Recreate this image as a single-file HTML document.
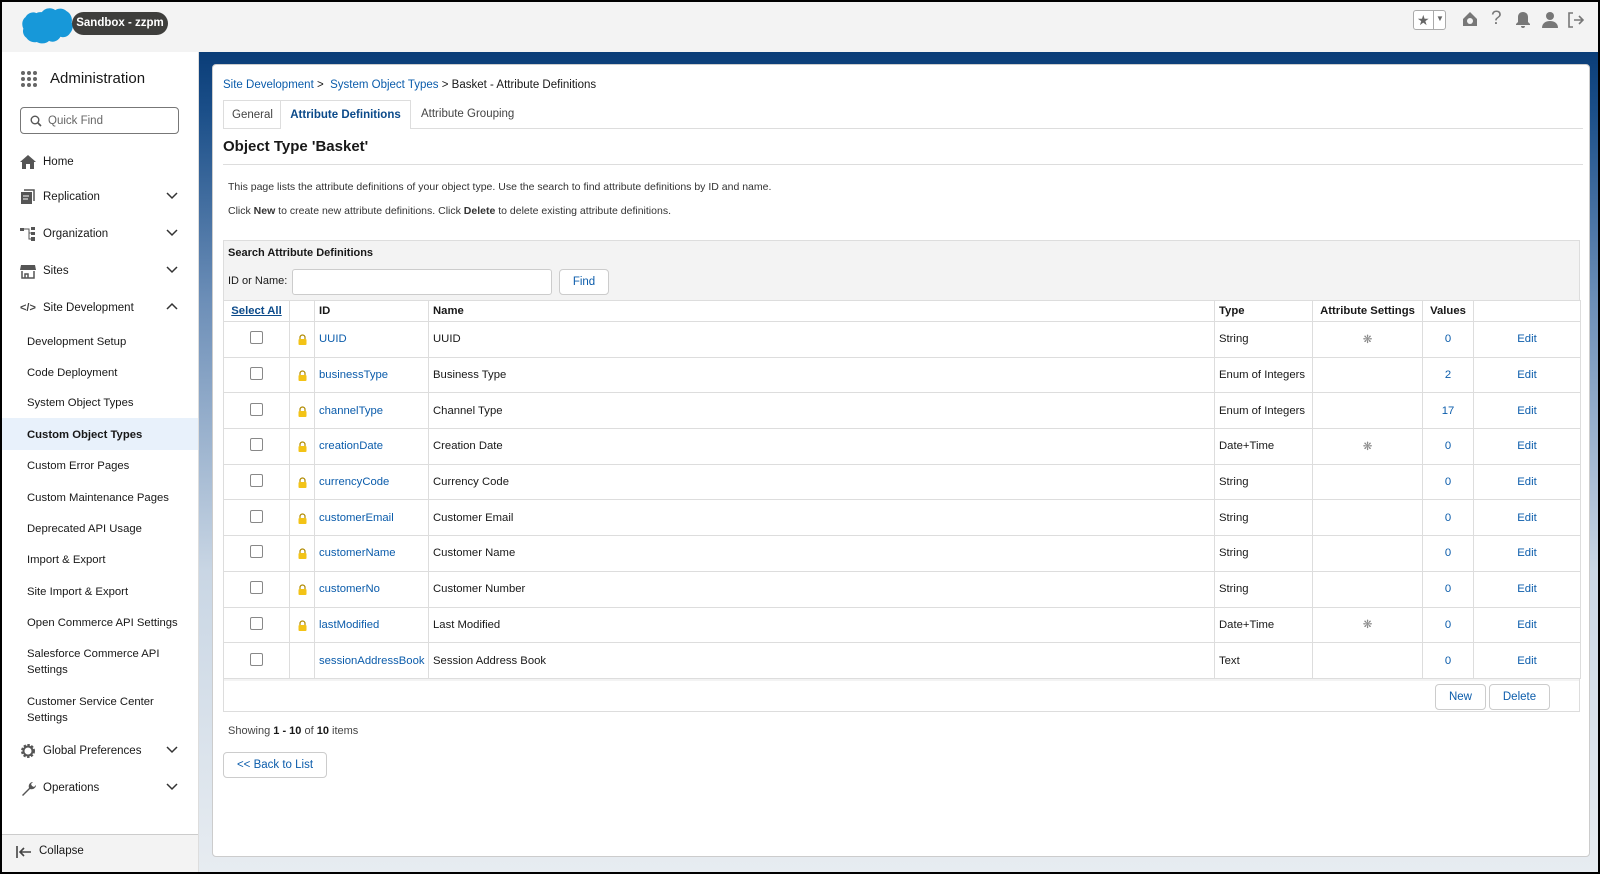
<!DOCTYPE html>
<html><head><meta charset="utf-8"><style>
*{box-sizing:border-box;margin:0;padding:0}
body{width:1600px;height:874px;overflow:hidden;font-family:"Liberation Sans",sans-serif;font-size:11.5px;color:#181818;background:#000;position:relative}
#frame{position:absolute;left:2px;top:2px;width:1596px;height:870px;background:#f3f3f3;overflow:hidden}
.a{position:absolute}
#hdr{left:0;top:0;width:1596px;height:50px;background:#f3f3f3}
#side{left:0;top:50px;width:197px;height:820px;background:#fff;border-right:1px solid #ddd}
#main{left:197px;top:50px;width:1399px;height:820px;background:linear-gradient(#0a3d78 0px,#1b4f89 60px,#6d8fb8 250px,#c9d6e4 520px,#e7ecf1 820px)}
#card{left:13px;top:12px;width:1378px;height:793px;background:#fff;border-radius:4px;border:1px solid #ccc}
.nav{position:absolute;left:18px;font-size:11.5px;color:#181818}
.nav .ic{position:absolute;left:0;top:-2px;width:16px;height:16px}
.nav span.t{position:absolute;left:23px;white-space:nowrap}
.chev{position:absolute;left:146px;top:0px;width:12px;height:10px}
.sub{position:absolute;left:25px;font-size:11.3px;color:#181818;white-space:nowrap;line-height:16px}
a{color:#0b5cab;text-decoration:none}
table{border-collapse:collapse;table-layout:fixed}
td,th{border:1px solid #ddd;font-size:11.3px;height:35.7px;padding:0 4px;text-align:left;white-space:nowrap}
th{height:21px;font-weight:bold}
.c{text-align:center}
.cb{display:inline-block;width:13px;height:13px;border:1px solid #888;border-radius:2px;background:#fff}
.lock{display:inline-block;width:9px;height:11px;position:relative;top:2px}
.btn{position:absolute;border:1px solid #ccc;border-radius:4px;background:#fff;color:#0b5cab;font-size:11.5px;text-align:center}
</style></head><body><div id="frame">
<div id="hdr" class="a">
 <svg class="a" style="left:19px;top:5px" width="52" height="37" viewBox="0 0 50 36"><path d="M20 5c3-4 9-5 13-2 3-2 8-2 11 1 4 2 6 7 5 11 2 3 1 8-2 11-2 3-6 4-9 3-2 4-7 6-11 4-3 3-8 3-12 1-4 1-8-1-10-4-3-2-4-6-3-9C0 17 1 12 4 10c2-4 7-6 11-4 1-1 3-1 5-1z" fill="#1798d9"/></svg>
 <div class="a" style="left:70px;top:10px;width:96px;height:23px;background:#3e3e3c;border-radius:12px;color:#fff;font-weight:bold;font-size:11.5px;line-height:23px;text-align:center">Sandbox - zzpm</div>
 <div class="a" style="left:1411px;top:8px;width:33px;height:20px;border:1px solid #aaa;border-radius:3px;background:#fff"><span class="a" style="left:3px;top:1px;font-size:14px;color:#666">★</span><span class="a" style="left:19px;top:0;width:1px;height:18px;background:#aaa"></span><span class="a" style="left:22px;top:3px;font-size:8px;color:#666">▼</span></div>
 <svg class="a" style="left:1459px;top:9px" width="18" height="18" viewBox="0 0 18 18"><path d="M9 1L2 8v7h14V8z" fill="#777"/><circle cx="9" cy="10" r="3" fill="#f3f3f3"/></svg>
 <div class="a" style="left:1489px;top:6px;font-size:19px;color:#777">?</div>
 <svg class="a" style="left:1513px;top:9px" width="16" height="18" viewBox="0 0 16 18"><path d="M8 1c-3 0-5 2-5 5v5l-2 2v1h14v-1l-2-2V6c0-3-2-5-5-5zM6 15a2 2 0 004 0z" fill="#777"/></svg>
 <svg class="a" style="left:1540px;top:9px" width="16" height="18" viewBox="0 0 16 18"><circle cx="8" cy="5" r="4" fill="#777"/><path d="M0 17c0-5 4-7 8-7s8 2 8 7z" fill="#777"/></svg>
 <svg class="a" style="left:1565px;top:9px" width="17" height="18" viewBox="0 0 17 18"><path d="M6 2H2v14h4M7 9h9M12 5l4 4-4 4" fill="none" stroke="#777" stroke-width="1.6"/></svg>
</div>
<div id="side" class="a">
 <svg class="a" style="left:18px;top:18px" width="18" height="18" viewBox="0 0 18 18" fill="#666"><circle cx="3" cy="3" r="2"/><circle cx="9" cy="3" r="2"/><circle cx="15" cy="3" r="2"/><circle cx="3" cy="9" r="2"/><circle cx="9" cy="9" r="2"/><circle cx="15" cy="9" r="2"/><circle cx="3" cy="15" r="2"/><circle cx="9" cy="15" r="2"/><circle cx="15" cy="15" r="2"/></svg>
 <div class="a" style="left:48px;top:18px;font-size:15px">Administration</div>
 <div class="a" style="left:18px;top:55px;width:159px;height:27px;border:1px solid #777;border-radius:4px"><svg class="a" style="left:9px;top:7px" width="12" height="12" viewBox="0 0 12 12"><circle cx="5" cy="5" r="3.8" fill="none" stroke="#555" stroke-width="1.4"/><path d="M8 8l3 3" stroke="#555" stroke-width="1.6"/></svg><span class="a" style="left:27px;top:7px;color:#666;font-size:11.5px">Quick Find</span></div>
 <div class="nav" style="top:104px"><svg class="ic" viewBox="0 0 16 16"><path d="M8 1L0 8h2v7h4v-5h4v5h4V8h2z" fill="#555"/></svg><span class="t">Home</span></div>
 <div class="nav" style="top:139px"><svg class="ic" viewBox="0 0 16 16"><rect x="1" y="3" width="11" height="12" fill="#555"/><path d="M4 1h10v11" fill="none" stroke="#555" stroke-width="1.5"/><path d="M3 7h6M3 10h5" stroke="#fff"/></svg><span class="t">Replication</span><svg class="chev" viewBox="0 0 12 10"><path d="M1 2l5 5 5-5" fill="none" stroke="#333" stroke-width="1.5"/></svg></div>
 <div class="nav" style="top:176px"><svg class="ic" viewBox="0 0 16 16" fill="#555"><rect x="0" y="2" width="4" height="3"/><rect x="11" y="1" width="4" height="3"/><rect x="11" y="6" width="4" height="3"/><rect x="11" y="11" width="4" height="4"/><path d="M4 3h5v10h2M9 7h2" stroke="#555" fill="none"/></svg><span class="t">Organization</span><svg class="chev" viewBox="0 0 12 10"><path d="M1 2l5 5 5-5" fill="none" stroke="#333" stroke-width="1.5"/></svg></div>
 <div class="nav" style="top:213px"><svg class="ic" viewBox="0 0 16 16"><path d="M1 2h14l1 5H0z" fill="#555"/><path d="M2 8v7h12V8M5 15v-4h3v4" fill="none" stroke="#555" stroke-width="1.5"/></svg><span class="t">Sites</span><svg class="chev" viewBox="0 0 12 10"><path d="M1 2l5 5 5-5" fill="none" stroke="#333" stroke-width="1.5"/></svg></div>
 <div class="nav" style="top:250px"><span class="ic" style="font-size:11px;font-weight:bold;color:#444;top:0">&lt;/&gt;</span><span class="t">Site Development</span><svg class="chev" viewBox="0 0 12 10"><path d="M1 7l5-5 5 5" fill="none" stroke="#333" stroke-width="1.5"/></svg></div>
 <div class="sub" style="top:282px">Development Setup</div>
 <div class="sub" style="top:313px">Code Deployment</div>
 <div class="sub" style="top:343px">System Object Types</div>
 <div class="a" style="left:0;top:366px;width:196px;height:32px;background:#e8f1fb"></div>
 <div class="sub" style="top:375px;font-weight:bold">Custom Object Types</div>
 <div class="sub" style="top:406px">Custom Error Pages</div>
 <div class="sub" style="top:438px">Custom Maintenance Pages</div>
 <div class="sub" style="top:469px">Deprecated API Usage</div>
 <div class="sub" style="top:500px">Import &amp; Export</div>
 <div class="sub" style="top:532px">Site Import &amp; Export</div>
 <div class="sub" style="top:563px">Open Commerce API Settings</div>
 <div class="sub" style="top:594px">Salesforce Commerce API<br>Settings</div>
 <div class="sub" style="top:642px">Customer Service Center<br>Settings</div>
 <div class="nav" style="top:693px"><svg class="ic" viewBox="0 0 16 16"><circle cx="8" cy="8" r="5.5" fill="none" stroke="#555" stroke-width="3" stroke-dasharray="2.2 1.4"/><circle cx="8" cy="8" r="4.5" fill="none" stroke="#555" stroke-width="2"/></svg><span class="t">Global Preferences</span><svg class="chev" viewBox="0 0 12 10"><path d="M1 2l5 5 5-5" fill="none" stroke="#333" stroke-width="1.5"/></svg></div>
 <div class="nav" style="top:730px"><svg class="ic" viewBox="0 0 16 16"><path d="M2 15l7-7c-1-3 1-6 4-6l-2 2 1 2 2 1 2-2c0 3-3 5-6 4l-7 7z" fill="#555"/></svg><span class="t">Operations</span><svg class="chev" viewBox="0 0 12 10"><path d="M1 2l5 5 5-5" fill="none" stroke="#333" stroke-width="1.5"/></svg></div>
 <div class="a" style="left:0;top:782px;width:196px;height:38px;background:#f3f3f3;border-top:1px solid #ccc"></div>
 <svg class="a" style="left:14px;top:794px" width="16" height="12" viewBox="0 0 16 12"><path d="M1 0v12M15 6H4M8 2L4 6l4 4" fill="none" stroke="#444" stroke-width="1.6"/></svg>
 <div class="a" style="left:37px;top:793px;font-size:11.5px">Collapse</div>
</div>
<div id="main" class="a">
 <div id="card" class="a">
  <div class="a" style="left:10px;top:14px;font-size:11.5px;white-space:nowrap"><a>Site Development</a> &gt;&nbsp; <a>System Object Types</a> &gt; Basket - Attribute Definitions</div>
  <div class="a" style="left:10px;top:63px;width:1360px;height:1px;background:#ddd"></div>
  <div class="a" style="left:10px;top:35px;width:58px;height:28px;border-top:1px solid #ddd;border-left:1px solid #ddd;text-align:center;line-height:28px;color:#444">General</div>
  <div class="a" style="left:67px;top:35px;width:131px;height:29px;border:1px solid #ddd;border-bottom:none;background:#fff;text-align:center;line-height:28px;color:#0b4a8a;font-weight:bold">Attribute Definitions</div>
  <div class="a" style="left:208px;top:35px;line-height:28px;color:#444">Attribute Grouping</div>
  <div class="a" style="left:10px;top:73px;font-size:15px;font-weight:bold">Object Type 'Basket'</div>
  <div class="a" style="left:10px;top:99px;width:1360px;height:1px;background:#ddd"></div>
  <div class="a" style="left:15px;top:116px;font-size:10.5px;color:#333">This page lists the attribute definitions of your object type. Use the search to find attribute definitions by ID and name.</div>
  <div class="a" style="left:15px;top:140px;font-size:10.5px;color:#333">Click <b>New</b> to create new attribute definitions. Click <b>Delete</b> to delete existing attribute definitions.</div>
  <div class="a" style="left:10px;top:175px;width:1357px;height:472px;border:1px solid #ddd;background:#f3f3f3"></div>
  <div class="a" style="left:15px;top:182px;font-size:11px;font-weight:bold">Search Attribute Definitions</div>
  <div class="a" style="left:15px;top:210px;font-size:11px">ID or Name:</div>
  <div class="a" style="left:79px;top:204px;width:260px;height:26px;border:1px solid #ccc;border-radius:3px;background:#fff"></div>
  <div class="btn" style="left:346px;top:204px;width:50px;height:26px;line-height:24px">Find</div>
  <table class="a" style="left:10px;top:235px;width:1357px;background:#fff">
   <colgroup><col style="width:66px"><col style="width:25px"><col style="width:114px"><col style="width:786px"><col style="width:98px"><col style="width:110px"><col style="width:51px"><col style="width:107px"></colgroup>
   <tr><th class="c"><a style="text-decoration:underline;color:#0b4a8a">Select All</a></th><th></th><th>ID</th><th>Name</th><th>Type</th><th class="c">Attribute Settings</th><th class="c">Values</th><th></th></tr>
   <tr><td class="c"><span class="cb"></span></td><td class="c"><svg class="lock" viewBox="0 0 9 11"><path d="M2 5V3.5a2.5 2.5 0 015 0V5" fill="none" stroke="#b08a00" stroke-width="1.2"/><rect x="0.5" y="5" width="8" height="6" rx="1" fill="#f3c316"/></svg></td><td><a>UUID</a></td><td>UUID</td><td>String</td><td class="c" style="color:#888">&#10059;</td><td class="c"><a>0</a></td><td class="c"><a>Edit</a></td></tr>
   <tr><td class="c"><span class="cb"></span></td><td class="c"><svg class="lock" viewBox="0 0 9 11"><path d="M2 5V3.5a2.5 2.5 0 015 0V5" fill="none" stroke="#b08a00" stroke-width="1.2"/><rect x="0.5" y="5" width="8" height="6" rx="1" fill="#f3c316"/></svg></td><td><a>businessType</a></td><td>Business Type</td><td>Enum of Integers</td><td></td><td class="c"><a>2</a></td><td class="c"><a>Edit</a></td></tr>
   <tr><td class="c"><span class="cb"></span></td><td class="c"><svg class="lock" viewBox="0 0 9 11"><path d="M2 5V3.5a2.5 2.5 0 015 0V5" fill="none" stroke="#b08a00" stroke-width="1.2"/><rect x="0.5" y="5" width="8" height="6" rx="1" fill="#f3c316"/></svg></td><td><a>channelType</a></td><td>Channel Type</td><td>Enum of Integers</td><td></td><td class="c"><a>17</a></td><td class="c"><a>Edit</a></td></tr>
   <tr><td class="c"><span class="cb"></span></td><td class="c"><svg class="lock" viewBox="0 0 9 11"><path d="M2 5V3.5a2.5 2.5 0 015 0V5" fill="none" stroke="#b08a00" stroke-width="1.2"/><rect x="0.5" y="5" width="8" height="6" rx="1" fill="#f3c316"/></svg></td><td><a>creationDate</a></td><td>Creation Date</td><td>Date+Time</td><td class="c" style="color:#888">&#10059;</td><td class="c"><a>0</a></td><td class="c"><a>Edit</a></td></tr>
   <tr><td class="c"><span class="cb"></span></td><td class="c"><svg class="lock" viewBox="0 0 9 11"><path d="M2 5V3.5a2.5 2.5 0 015 0V5" fill="none" stroke="#b08a00" stroke-width="1.2"/><rect x="0.5" y="5" width="8" height="6" rx="1" fill="#f3c316"/></svg></td><td><a>currencyCode</a></td><td>Currency Code</td><td>String</td><td></td><td class="c"><a>0</a></td><td class="c"><a>Edit</a></td></tr>
   <tr><td class="c"><span class="cb"></span></td><td class="c"><svg class="lock" viewBox="0 0 9 11"><path d="M2 5V3.5a2.5 2.5 0 015 0V5" fill="none" stroke="#b08a00" stroke-width="1.2"/><rect x="0.5" y="5" width="8" height="6" rx="1" fill="#f3c316"/></svg></td><td><a>customerEmail</a></td><td>Customer Email</td><td>String</td><td></td><td class="c"><a>0</a></td><td class="c"><a>Edit</a></td></tr>
   <tr><td class="c"><span class="cb"></span></td><td class="c"><svg class="lock" viewBox="0 0 9 11"><path d="M2 5V3.5a2.5 2.5 0 015 0V5" fill="none" stroke="#b08a00" stroke-width="1.2"/><rect x="0.5" y="5" width="8" height="6" rx="1" fill="#f3c316"/></svg></td><td><a>customerName</a></td><td>Customer Name</td><td>String</td><td></td><td class="c"><a>0</a></td><td class="c"><a>Edit</a></td></tr>
   <tr><td class="c"><span class="cb"></span></td><td class="c"><svg class="lock" viewBox="0 0 9 11"><path d="M2 5V3.5a2.5 2.5 0 015 0V5" fill="none" stroke="#b08a00" stroke-width="1.2"/><rect x="0.5" y="5" width="8" height="6" rx="1" fill="#f3c316"/></svg></td><td><a>customerNo</a></td><td>Customer Number</td><td>String</td><td></td><td class="c"><a>0</a></td><td class="c"><a>Edit</a></td></tr>
   <tr><td class="c"><span class="cb"></span></td><td class="c"><svg class="lock" viewBox="0 0 9 11"><path d="M2 5V3.5a2.5 2.5 0 015 0V5" fill="none" stroke="#b08a00" stroke-width="1.2"/><rect x="0.5" y="5" width="8" height="6" rx="1" fill="#f3c316"/></svg></td><td><a>lastModified</a></td><td>Last Modified</td><td>Date+Time</td><td class="c" style="color:#888">&#10059;</td><td class="c"><a>0</a></td><td class="c"><a>Edit</a></td></tr>
   <tr><td class="c"><span class="cb"></span></td><td></td><td><a>sessionAddressBook</a></td><td>Session Address Book</td><td>Text</td><td></td><td class="c"><a>0</a></td><td class="c"><a>Edit</a></td></tr>
  </table>
  <div class="a" style="left:11px;top:616px;width:1355px;height:30px;background:#fff"></div>
  <div class="btn" style="left:1222px;top:619px;width:51px;height:26px;line-height:25px">New</div>
  <div class="btn" style="left:1276px;top:619px;width:61px;height:26px;line-height:25px">Delete</div>
  <div class="a" style="left:15px;top:660px;font-size:11px;color:#444">Showing <b style="color:#181818">1 - 10</b> of <b style="color:#181818">10</b> items</div>
  <div class="btn" style="left:10px;top:687px;width:104px;height:26px;line-height:25px">&lt;&lt; Back to List</div>
 </div>
</div>
</div></body></html>
